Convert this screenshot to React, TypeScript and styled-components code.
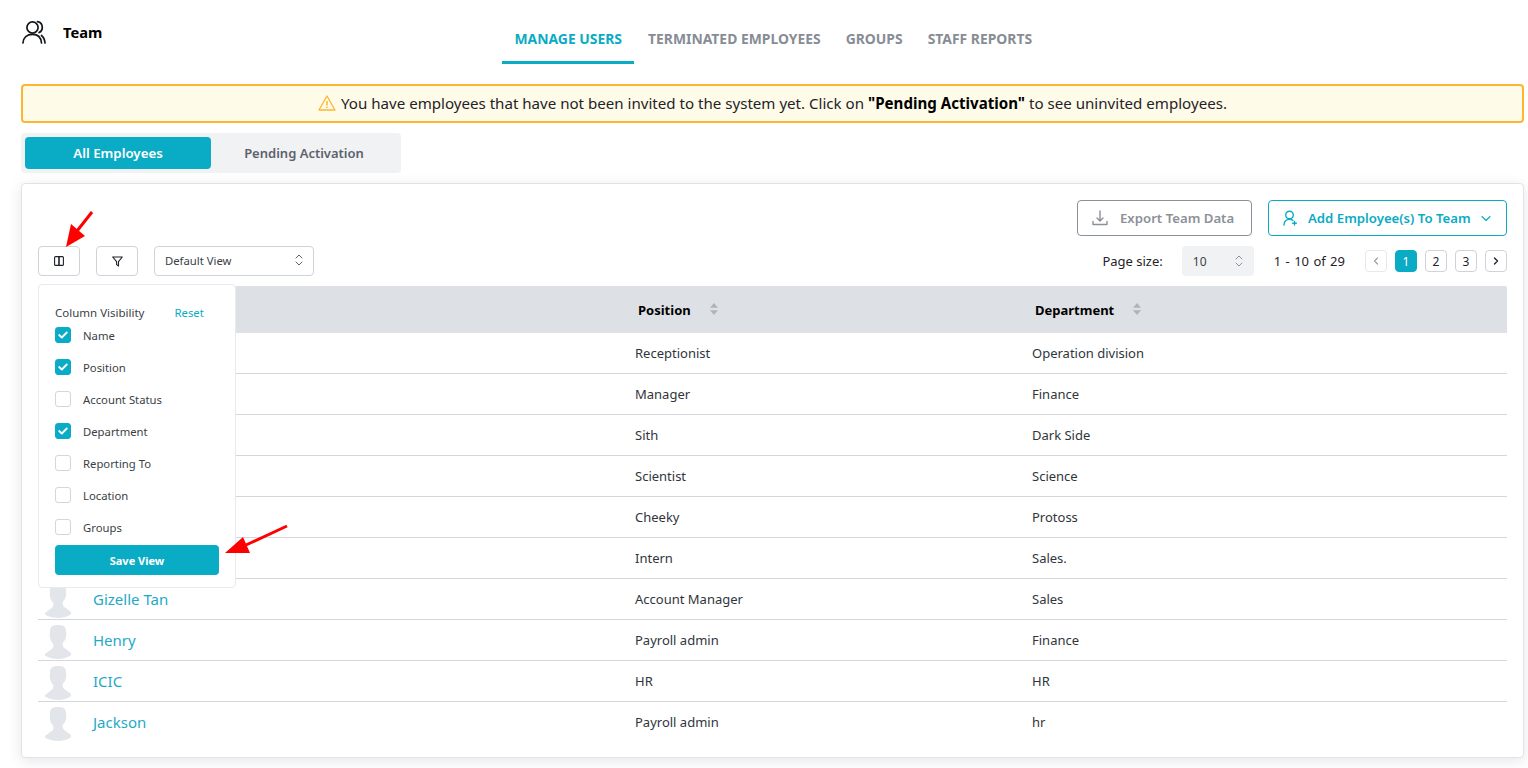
import React from "react";
import styled, { createGlobalStyle } from "styled-components";

const Global = createGlobalStyle`
  html, body { margin: 0; padding: 0; background: #fff; }
  body { font-family: "Noto Sans", "Open Sans", sans-serif; color: #1f2329; overflow: hidden; }
  * { box-sizing: border-box; }
`;

const TEAL = "#0aabc4";

const Page = styled.div`
  position: relative;
  width: 1528px;
  height: 768px;
  padding: 0 4px 0 21px;
  overflow: hidden;
`;
const Header = styled.header`
  display: flex;
  height: 84px;
`;
const TitleBlock = styled.div`
  width: 468px;
  padding: 20px 0 0 1px;
  display: flex;
  align-items: flex-start;
  gap: 17px;
`;
const TitleText = styled.h1`
  margin: 2px 0 0;
  font-size: 14.7px;
  line-height: 20px;
  font-weight: 700;
  color: #000;
`;
const Nav = styled.nav`
  display: flex;
  margin-left: 13px;
  height: 64px;
`;
const NavTab = styled.a<{ $active?: boolean }>`
  display: flex;
  align-items: center;
  height: 64px;
  padding: 16px 12px 0 12.5px;
  margin-right: ${(p) => (p.$active ? "1.5px" : "0.5px")};
  font-size: 13.9px;
  font-weight: 700;
  color: ${(p) => (p.$active ? TEAL : "#878c95")};
  border-bottom: 3px solid ${(p) => (p.$active ? TEAL : "transparent")};
`;
const Alert = styled.div`
  height: 39px;
  border: 2px solid #fbb731;
  border-radius: 4px;
  background: #fefbe8;
  display: flex;
  align-items: center;
  justify-content: center;
  gap: 5px;
  padding-bottom: 2px;
  font-size: 15.1px;
  color: #1f2329;
  b { font-weight: 700; color: #000; }
`;
const Segments = styled.div`
  margin-top: 10px;
  width: 380px;
  height: 40px;
  padding: 4px;
  background: #f1f2f4;
  border-radius: 4px;
  display: flex;
`;
const Segment = styled.div<{ $active?: boolean }>`
  flex: ${(p) => (p.$active ? "0 0 186px" : "1")};
  border-radius: 4px;
  display: flex;
  align-items: center;
  justify-content: center;
  font-size: ${(p) => (p.$active ? "13.3px" : "13px")};
  font-weight: 600;
  background: ${(p) => (p.$active ? TEAL : "transparent")};
  color: ${(p) => (p.$active ? "#fff" : "#5c626c")};
`;
const Card = styled.section`
  position: relative;
  margin-top: 10px;
  height: 575px;
  border: 1px solid #e1e3e7;
  border-radius: 4px;
  background: #fff;
  box-shadow: 0 3px 14px rgba(40, 50, 70, 0.12);
  padding: 16px 16px 0;
`;
const Actions = styled.div`
  display: flex;
  justify-content: flex-end;
  gap: 16px;
`;
const OutlineButton = styled.div<{ $teal?: boolean }>`
  height: 36px;
  width: ${(p) => (p.$teal ? "239px" : "175px")};
  display: flex;
  align-items: center;
  border-radius: 4px;
  font-size: 13.2px;
  font-weight: 600;
  white-space: nowrap;
  border: 1px solid ${(p) => (p.$teal ? TEAL : "#8b9099")};
  color: ${(p) => (p.$teal ? TEAL : "#8b9099")};
  padding-left: 14px;
  gap: ${(p) => (p.$teal ? "10px" : "12px")};
`;
const Toolbar = styled.div`
  margin-top: 10px;
  height: 30px;
  display: flex;
  align-items: center;
`;
const IconButton = styled.div`
  width: 42px;
  height: 30px;
  border: 1px solid #cfd3d9;
  border-radius: 4px;
  display: flex;
  align-items: center;
  justify-content: center;
  margin-right: 16px;
  color: #1f2329;
`;
const ViewSelect = styled.div`
  width: 160px;
  height: 30px;
  border: 1px solid #cfd3d9;
  border-radius: 4px;
  display: flex;
  align-items: center;
  justify-content: space-between;
  padding: 0 10px 2px 10px;
  font-size: 11.3px;
  color: #3a3f47;
`;
const Pager = styled.div`
  margin-left: auto;
  display: flex;
  align-items: center;
  font-size: 13px;
  color: #1f2329;
`;
const SizeSelect = styled.div`
  margin-left: 19px;
  width: 72px;
  height: 30px;
  background: #f1f2f4;
  border-radius: 4px;
  display: flex;
  align-items: center;
  justify-content: space-between;
  padding: 0 11px;
  font-size: 12px;
  color: #3a3f47;
`;
const RangeText = styled.span`
  margin: 0 20px;
  word-spacing: 1px;
`;
const PageButtons = styled.div`
  display: flex;
  gap: 8px;
`;
const PageButton = styled.div<{ $active?: boolean; $muted?: boolean }>`
  width: 22px;
  height: 22px;
  border-radius: 4px;
  display: flex;
  align-items: center;
  justify-content: center;
  font-size: 12px;
  border: 1px solid ${(p) => (p.$active ? TEAL : p.$muted ? "#e6e8eb" : "#cfd3d9")};
  background: ${(p) => (p.$active ? TEAL : "#fff")};
  color: ${(p) => (p.$active ? "#fff" : p.$muted ? "#9a9fa7" : "#1f2329")};
`;
const Table = styled.div`
  margin-top: 10px;
`;
const Row = styled.div`
  display: grid;
  grid-template-columns: 597px 397px 1fr;
  align-items: center;
`;
const HeadRow = styled(Row)`
  height: 47px;
  background: #dde0e5;
  border-radius: 2px 2px 0 0;
`;
const HeadCell = styled.div`
  display: flex;
  align-items: center;
  gap: 19px;
  padding-left: 3px;
  font-size: 13px;
  font-weight: 700;
  color: #000;
`;
const BodyRow = styled(Row)<{ $last?: boolean }>`
  height: 41px;
  border-bottom: 1px solid ${(p) => (p.$last ? "transparent" : "#d3d6dc")};
`;
const NameCell = styled.div`
  display: flex;
  align-items: center;
  gap: 22px;
  height: 40px;
  padding-left: 7px;
  font-size: 15px;
  color: #1fa9c6;
`;
const Cell = styled.div`
  font-size: 13px;
  color: #30353c;
`;
const Popover = styled.aside`
  position: absolute;
  left: 16px;
  top: 100px;
  width: 198px;
  height: 304px;
  background: #fff;
  border: 1px solid #e8eaed;
  border-radius: 4px;
  padding: 19px 16px 0;
  z-index: 2;
`;
const PopoverHead = styled.div`
  display: flex;
  align-items: center;
  height: 16px;
  font-size: 11.5px;
  color: #3a3f47;
`;
const ResetLink = styled.span`
  margin-left: 30px;
  font-size: 11.3px;
  color: ${TEAL};
`;
const CheckList = styled.div`
  margin-top: 7px;
  display: flex;
  flex-direction: column;
  gap: 16px;
`;
const CheckRow = styled.label`
  display: flex;
  align-items: center;
  gap: 12px;
  height: 16px;
  font-size: 11.3px;
  color: #3a3f47;
`;
const CheckBox = styled.span<{ $on?: boolean }>`
  width: 16px;
  height: 16px;
  border-radius: 3px;
  display: flex;
  align-items: center;
  justify-content: center;
  background: ${(p) => (p.$on ? TEAL : "#fff")};
  border: 1px solid ${(p) => (p.$on ? TEAL : "#d3d6dc")};
`;
const SaveButton = styled.div`
  margin-top: 10px;
  height: 30px;
  background: ${TEAL};
  color: #fff;
  border-radius: 4px;
  font-size: 11px;
  font-weight: 700;
  display: flex;
  align-items: center;
  justify-content: center;
`;
const Arrow = styled.svg`
  position: absolute;
  z-index: 3;
  left: 0;
  top: 0;
  pointer-events: none;
`;

const TeamIcon = () => (
  <svg width="24" height="24" viewBox="0 0 24 24" fill="none" stroke="#14171c" strokeWidth="1.7" strokeLinecap="round">
    <circle cx="10.5" cy="7.5" r="5.6" />
    <path d="M1 23c.3-5.4 4-8.6 9.5-8.600s8.600 3.300 9 8.600" />
    <path d="M15.500 1.600c3 .6 4.800 3 4.800 5.800 0 2.400-1.200 4.200-3.200 5.200" />
    <path d="M19.500 15.500c2 1.500 3.200 4 3.500 7.500" />
  </svg>
);
const WarnIcon = () => (
  <svg width="18" height="16" viewBox="0 0 18 16" fill="none" stroke="#fbb731" strokeWidth="1.3" strokeLinejoin="round">
    <path d="M9 1 1 15h16L9 1Z" />
    <path d="M9 6v4.500M9 11.800v1.200" strokeWidth="1.5" />
  </svg>
);
const ExportIcon = () => (
  <svg width="16" height="16" viewBox="0 0 16 16" fill="none" stroke="#8b9099" strokeWidth="1.4" strokeLinecap="round" strokeLinejoin="round" style={{ flex: "none" }}>
    <path d="M8 1v9.500M5 8l3 3 3-3M1 11.500v3h14v-3" />
  </svg>
);
const AddUserIcon = () => (
  <svg width="15" height="16" viewBox="0 0 15 16" fill="none" stroke={TEAL} strokeWidth="1.4" strokeLinecap="round" style={{ flex: "none" }}>
    <circle cx="6.500" cy="5" r="3.800" />
    <path d="M1 15c.2-3.600 2.400-5.600 5.500-5.600 1.400 0 2.500.4 3.400 1M11.500 11.500v3.600M9.700 13.300h3.600" />
  </svg>
);
const ChevronDown = () => (
  <svg width="10" height="7" viewBox="0 0 10 7" fill="none" stroke={TEAL} strokeWidth="1.1" strokeLinecap="round" strokeLinejoin="round" style={{ flex: "none" }}>
    <path d="m1 1.500 4 4 4-4" />
  </svg>
);
const ColumnsIcon = () => (
  <svg width="10" height="10" viewBox="0 0 10 10" fill="none" stroke="#1f2329" strokeWidth="1.1">
    <rect x=".6" y=".6" width="8.800" height="8.800" rx="1" />
    <path d="M5 .6v8.800" strokeWidth="1.6" />
  </svg>
);
const FilterIcon = () => (
  <svg width="11" height="11" viewBox="0 0 11 11" fill="none" stroke="#1f2329" strokeWidth="1.1" strokeLinejoin="round">
    <path d="M.7 1h9.600L6.500 5.600V10L4.600 8.600v-3L.7 1Z" />
  </svg>
);
const UpDown = ({ color = "#5c626c" }: { color?: string }) => (
  <svg width="8" height="12" viewBox="0 0 8 12" fill="none" stroke={color} strokeWidth="1" strokeLinecap="round" strokeLinejoin="round">
    <path d="m1 4 3-3 3 3M1 8l3 3 3-3" />
  </svg>
);
const SortIcon = () => (
  <svg width="8" height="12" viewBox="0 0 8 12" fill="#b0b4ba" style={{ marginTop: -2 }}>
    <path d="M4 0 8 4.800H0L4 0ZM4 12 0 7.200h8L4 12Z" />
  </svg>
);
const Check = () => (
  <svg width="10" height="8" viewBox="0 0 10 8" fill="none" stroke="#fff" strokeWidth="1.8" strokeLinecap="round" strokeLinejoin="round">
    <path d="m1.200 4 2.600 2.500 5-5" />
  </svg>
);
const PrevIcon = ({ color }: { color: string }) => (
  <svg width="6" height="8" viewBox="0 0 6 8" fill="none" stroke={color} strokeWidth="1.2" strokeLinecap="round" strokeLinejoin="round">
    <path d="M4.500 1 1.500 4l3 3" />
  </svg>
);
const NextIcon = ({ color }: { color: string }) => (
  <svg width="6" height="8" viewBox="0 0 6 8" fill="none" stroke={color} strokeWidth="1.4" strokeLinecap="round" strokeLinejoin="round">
    <path d="m1.500 1 3 3-3 3" />
  </svg>
);
const Avatar = () => (
  <svg width="26" height="34" viewBox="0 0 26 34" fill="#e2e5ea" style={{ flex: "none", marginTop: 3 }}>
    <path d="M13 0c5 0 8 1.500 8 6 0 2 .6 3.500 0 6-.4 2.200-1.400 4-3 5.500-.6 1-.6 3 .4 4.500 1 1.300 4.600 3.500 7.600 6 .5.500.5 1.500 0 2-3 2.500-8 4-13 4S3 32.500 0 30.500c-.3-.4-.3-1 0-1.500 3-2.500 6.600-4.700 7.600-6 1-1.500 1-3.500.4-4.500C6.400 17 5.400 15 5 12.500 4.500 10.500 5 8.500 5 6c0-4.500 3-6 8-6Z" />
  </svg>
);

const rows: [string, string, string][] = [
  ["", "Receptionist", "Operation division"],
  ["", "Manager", "Finance"],
  ["", "Sith", "Dark Side"],
  ["", "Scientist", "Science"],
  ["", "Cheeky", "Protoss"],
  ["", "Intern", "Sales."],
  ["Gizelle Tan", "Account Manager", "Sales"],
  ["Henry", "Payroll admin", "Finance"],
  ["ICIC", "HR", "HR"],
  ["Jackson", "Payroll admin", "hr"],
];
const columns: [string, boolean][] = [
  ["Name", true],
  ["Position", true],
  ["Account Status", false],
  ["Department", true],
  ["Reporting To", false],
  ["Location", false],
  ["Groups", false],
];

export default function App() {
  return (
    <Page>
      <Global />
      <Header>
        <TitleBlock>
          <TeamIcon />
          <TitleText>Team</TitleText>
        </TitleBlock>
        <Nav>
          <NavTab $active>MANAGE USERS</NavTab>
          <NavTab>TERMINATED EMPLOYEES</NavTab>
          <NavTab>GROUPS</NavTab>
          <NavTab>STAFF REPORTS</NavTab>
        </Nav>
      </Header>
      <Alert>
        <WarnIcon />
        <span>
          You have employees that have not been invited to the system yet. Click on <b>"Pending Activation"</b> to see uninvited employees.
        </span>
      </Alert>
      <Segments>
        <Segment $active>All Employees</Segment>
        <Segment>Pending Activation</Segment>
      </Segments>
      <Card>
        <Actions>
          <OutlineButton>
            <ExportIcon />
            Export Team Data
          </OutlineButton>
          <OutlineButton $teal>
            <AddUserIcon />
            Add Employee(s) To Team
            <ChevronDown />
          </OutlineButton>
        </Actions>
        <Toolbar>
          <IconButton>
            <ColumnsIcon />
          </IconButton>
          <IconButton>
            <FilterIcon />
          </IconButton>
          <ViewSelect>
            Default View
            <UpDown />
          </ViewSelect>
          <Pager>
            Page size:
            <SizeSelect>
              10
              <UpDown color="#8b9099" />
            </SizeSelect>
            <RangeText>1 - 10 of 29</RangeText>
            <PageButtons>
              <PageButton $muted>
                <PrevIcon color="#9a9fa7" />
              </PageButton>
              <PageButton $active>1</PageButton>
              <PageButton>2</PageButton>
              <PageButton>3</PageButton>
              <PageButton>
                <NextIcon color="#1f2329" />
              </PageButton>
            </PageButtons>
          </Pager>
        </Toolbar>
        <Table>
          <HeadRow>
            <div />
            <HeadCell>
              Position
              <SortIcon />
            </HeadCell>
            <HeadCell>
              Department
              <SortIcon />
            </HeadCell>
          </HeadRow>
          {rows.map(([name, position, dept], i) => (
            <BodyRow key={position + dept} $last={i === rows.length - 1}>
              <NameCell>
                <Avatar />
                {name}
              </NameCell>
              <Cell>{position}</Cell>
              <Cell>{dept}</Cell>
            </BodyRow>
          ))}
        </Table>
        <Popover>
          <PopoverHead>
            Column Visibility
            <ResetLink>Reset</ResetLink>
          </PopoverHead>
          <CheckList>
            {columns.map(([label, on]) => (
              <CheckRow key={label}>
                <CheckBox $on={on}>{on && <Check />}</CheckBox>
                {label}
              </CheckRow>
            ))}
          </CheckList>
          <SaveButton>Save View</SaveButton>
        </Popover>
      </Card>
      <Arrow width="1528" height="768" viewBox="0 0 1528 768">
        <path d="M92 212 77 231" stroke="#f00" strokeWidth="3" fill="none" />
        <path d="M66 247 71 224 85 236Z" fill="#f00" />
        <path d="M287 526 246 545" stroke="#f00" strokeWidth="3" fill="none" />
        <path d="M225 553 243 537 250 553Z" fill="#f00" />
      </Arrow>
    </Page>
  );
}
